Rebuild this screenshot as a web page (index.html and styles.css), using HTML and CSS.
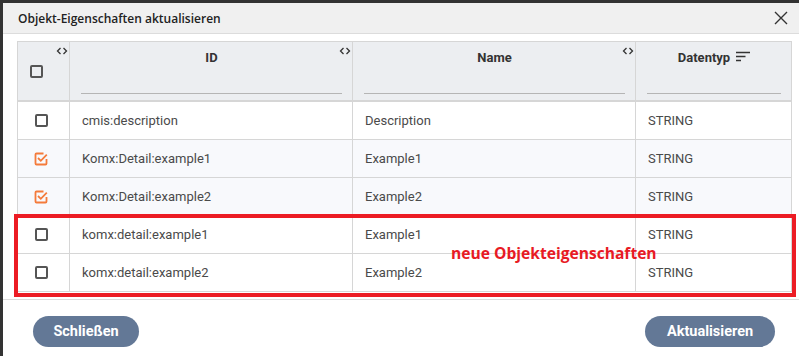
FILE: index.html
```html
<!DOCTYPE html>
<html lang="de">
<head>
  <meta charset="UTF-8">
  <title>Objekt-Eigenschaften aktualisieren</title>
  <link rel="stylesheet" href="styles.css">
</head>
<body>

<div class="dialog">
  <div class="dialog-head">
    <span class="dialog-title">Objekt-Eigenschaften aktualisieren</span>
    <svg class="close" width="14" height="14" viewBox="0 0 14 14">
      <path d="M1 1 L13 13 M13 1 L1 13" stroke="#333" stroke-width="1.4" fill="none"/>
    </svg>
  </div>

  <div class="dialog-body">
    <table class="grid">
      <colgroup>
        <col class="c-check">
        <col class="c-id">
        <col class="c-name">
        <col class="c-type">
      </colgroup>
      <thead>
        <tr>
          <th class="th-check">
            <span class="box"></span>
            <svg class="resize" width="12" height="8" viewBox="0 0 12 8"><path d="M4.5 1 L1.5 4 L4.5 7 M7.5 1 L10.5 4 L7.5 7" stroke="#333" stroke-width="1.3" fill="none"/></svg>
          </th>
          <th>
            <div class="th-title">ID</div>
            <div class="filter"></div>
            <svg class="resize" width="12" height="8" viewBox="0 0 12 8"><path d="M4.5 1 L1.5 4 L4.5 7 M7.5 1 L10.5 4 L7.5 7" stroke="#333" stroke-width="1.3" fill="none"/></svg>
          </th>
          <th>
            <div class="th-title">Name</div>
            <div class="filter"></div>
            <svg class="resize" width="12" height="8" viewBox="0 0 12 8"><path d="M4.5 1 L1.5 4 L4.5 7 M7.5 1 L10.5 4 L7.5 7" stroke="#333" stroke-width="1.3" fill="none"/></svg>
          </th>
          <th>
            <div class="th-title">Datentyp
              <svg class="sort" width="14" height="11" viewBox="0 0 14 11"><path d="M0 1.5 H14 M0 5.5 H9.5 M0 9.5 H5" stroke="#333" stroke-width="1.5" fill="none"/></svg>
            </div>
            <div class="filter"></div>
          </th>
        </tr>
      </thead>
      <tbody>
        <tr>
          <td class="td-check"><span class="box"></span></td>
          <td>cmis:description</td>
          <td>Description</td>
          <td>STRING</td>
        </tr>
        <tr class="sel">
          <td class="td-check"><svg class="checked" width="14" height="14" viewBox="0 0 14 14"><path d="M9.5 1.5 H2.5 Q1.5 1.5 1.5 2.5 V11.5 Q1.5 12.5 2.5 12.5 H11.5 Q12.5 12.5 12.5 11.5 V7" stroke="#f47b3b" stroke-width="1.8" fill="none"/><path d="M4 6 L6.8 8.8 L12.8 2.6" stroke="#f47b3b" stroke-width="1.8" fill="none"/></svg></td>
          <td>Komx:Detail:example1</td>
          <td>Example1</td>
          <td>STRING</td>
        </tr>
        <tr class="sel">
          <td class="td-check"><svg class="checked" width="14" height="14" viewBox="0 0 14 14"><path d="M9.5 1.5 H2.5 Q1.5 1.5 1.5 2.5 V11.5 Q1.5 12.5 2.5 12.5 H11.5 Q12.5 12.5 12.5 11.5 V7" stroke="#f47b3b" stroke-width="1.8" fill="none"/><path d="M4 6 L6.8 8.8 L12.8 2.6" stroke="#f47b3b" stroke-width="1.8" fill="none"/></svg></td>
          <td>Komx:Detail:example2</td>
          <td>Example2</td>
          <td>STRING</td>
        </tr>
        <tr>
          <td class="td-check"><span class="box"></span></td>
          <td>komx:detail:example1</td>
          <td>Example1</td>
          <td>STRING</td>
        </tr>
        <tr>
          <td class="td-check"><span class="box"></span></td>
          <td>komx:detail:example2</td>
          <td>Example2</td>
          <td>STRING</td>
        </tr>
      </tbody>
    </table>
  </div>

  <div class="dialog-foot">
    <button class="btn btn-close">Schließen</button>
    <button class="btn btn-update">Aktualisieren</button>
  </div>

  <!-- Markierung der neuen Eigenschaften -->
  <div class="marker">
    <span class="marker-text">neue Objekteigenschaften</span>
  </div>
</div>

</body>
</html>
```

FILE: styles.css
```css
body {
  margin: 0;
  background-color: #333;
  font-family: Roboto, "Liberation Sans", sans-serif;
  overflow: hidden;
}

.dialog {
  position: relative;
  margin: 3px 0 0 3px;
  width: 796px;
  height: 353px;
  background-color: #fff;
}

.dialog-head {
  height: 30px;
  background-color: #f0f0f0;
  border-bottom: 1px solid #dcdcdc;
  display: flex;
  align-items: center;
  justify-content: space-between;
  padding: 0 11px 0 15px;
}

.dialog-title {
  font-family: "Open Sans", sans-serif;
  font-weight: 600;
  font-size: 12px;
  color: #222;
}

.dialog-body {
  padding: 7px 6px 7px 14px;
  border-bottom: 1px solid #dcdcdc;
}

/* Tabelle */
.grid {
  border-collapse: collapse;
  width: 774px;
  table-layout: fixed;
  border: 1px solid #d6d6d6;
  font-size: 13px;
}

.c-check { width: 52px; }
.c-id { width: 283px; }
.c-name { width: 283px; }
.c-type { width: 156px; }

.grid th {
  position: relative;
  height: 58px;
  padding: 0 10px 0 11px;
  background-color: #eceef1;
  border-left: 1px solid #d6d6d6;
  border-bottom: 2px solid #d6d6d6;
  vertical-align: top;
  font-weight: 700;
  color: #333;
}

.th-title {
  padding-top: 4px;
  height: 22px;
  display: flex;
  align-items: center;
  justify-content: center;
  gap: 6px;
}

.sort {
  margin-top: -2px;
}

.filter {
  margin-top: 25px;
  border-bottom: 1px solid #b5b5b5;
}

.th-check {
  vertical-align: middle !important;
  text-align: left;
}

.th-check .box {
  margin: 1px 0 0 1px;
}

.resize {
  position: absolute;
  top: 5px;
  right: 1px;
}

.grid td {
  height: 37px;
  padding: 0 12px;
  border-left: 1px solid #d6d6d6;
  border-bottom: 1px solid #d6d6d6;
  color: #4a4a4a;
}

.grid td.td-check {
  padding: 0 0 0 17px;
}

.grid tr.sel td {
  background-color: #f8f9fc;
}

.box {
  display: block;
  width: 9px;
  height: 9px;
  border: 2px solid #555;
  border-radius: 2px;
}

.checked {
  display: block;
  margin-left: -1px;
}

.dialog-foot {
  display: flex;
  justify-content: space-between;
  padding: 16px 24px 0 30px;
}

.btn {
  height: 31px;
  padding: 0;
  border: none;
  border-radius: 16px;
  background-color: #637896;
  color: #fff;
  font-family: Roboto, sans-serif;
  font-weight: 700;
  font-size: 14.5px;
}

.btn-close { width: 106px; }
.btn-update { width: 130px; }

/* rote Markierung ueber den neuen Zeilen */
.marker {
  position: absolute;
  left: 11px;
  top: 211px;
  width: 782px;
  height: 83px;
  box-sizing: border-box;
  border: 4px solid #ec1c24;
  display: flex;
  align-items: center;
  padding-left: 433px;
}

.marker-text {
  font-family: "Open Sans", sans-serif;
  font-weight: 700;
  font-size: 15.6px;
  color: #e81a24;
  margin-top: -6px;
}
```
